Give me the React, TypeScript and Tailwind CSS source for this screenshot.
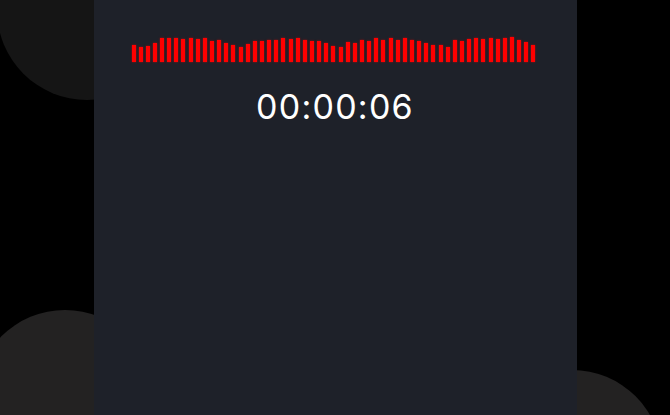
const bars = [
  17, 15, 16, 19, 24, 24, 24, 23, 24, 23, 24, 21, 22, 19, 17, 15, 18, 21, 21, 22, 22, 24, 23, 24, 22, 21, 21, 19,
  16, 15, 20, 19, 22, 21, 24, 22, 24, 22, 24, 22, 21, 19, 17, 17, 15, 22, 21, 23, 24, 23, 24, 23, 24, 25, 22, 20, 17,
];

function Waveform() {
  return (
    <div className="ml-[38px] mt-[37px] flex h-[25px] w-[404px] items-end justify-between">
      {bars.map((h, i) => (
        <span
          key={i}
          className="w-[4px] bg-[#ff0000] shadow-[0_0_2px_rgba(255,0,0,0.7)]"
          style={{ height: h }}
        />
      ))}
    </div>
  );
}

export default function App() {
  return (
    <div className="relative h-[415px] w-full overflow-hidden bg-black">
      {/* background blobs */}
      <div className="absolute left-[-3px] top-[-80px] h-[180px] w-[180px] rounded-full bg-[#151515]" />
      <div className="absolute left-[-25px] top-[310px] h-[180px] w-[180px] rounded-full bg-[#232222]" />
      <div className="absolute left-[482px] top-[370px] h-[180px] w-[180px] rounded-full bg-[#232222]" />

      <div className="relative mx-auto flex h-full w-[483px] flex-col bg-[#1e2129]">
        <Waveform />
        <p className="mt-[28px] text-center font-['Inter',sans-serif] text-[34px] leading-none tracking-[1.25px] text-white">
          00:00:06
        </p>
      </div>
    </div>
  );
}
